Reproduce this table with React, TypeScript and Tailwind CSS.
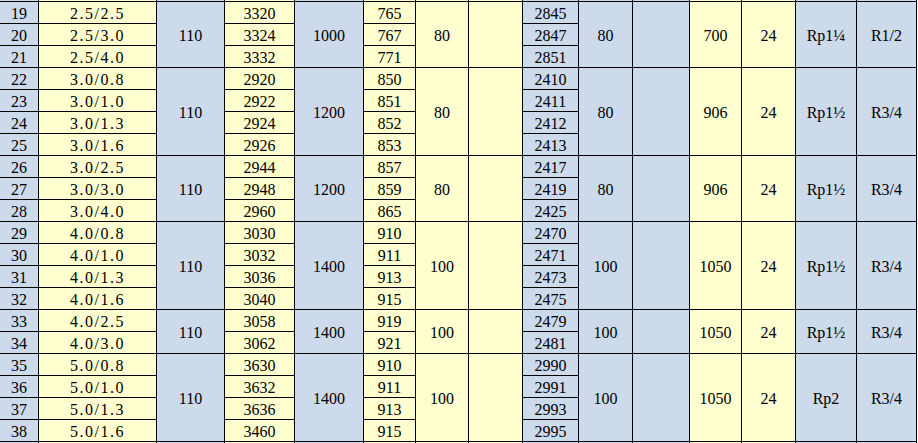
type Group = {
  rows: number[];
  specs: string[];
  a: string;
  b: string[];
  c: string;
  d: string[];
  e: string;
  f: string[];
  g: string;
  h: string;
  i: string;
  j: string;
  k: string;
};

const groups: Group[] = [
  {
    rows: [19, 20, 21],
    specs: ["2.5/2.5", "2.5/3.0", "2.5/4.0"],
    a: "110",
    b: ["3320", "3324", "3332"],
    c: "1000",
    d: ["765", "767", "771"],
    e: "80",
    f: ["2845", "2847", "2851"],
    g: "80",
    h: "700",
    i: "24",
    j: "Rp1¼",
    k: "R1/2",
  },
  {
    rows: [22, 23, 24, 25],
    specs: ["3.0/0.8", "3.0/1.0", "3.0/1.3", "3.0/1.6"],
    a: "110",
    b: ["2920", "2922", "2924", "2926"],
    c: "1200",
    d: ["850", "851", "852", "853"],
    e: "80",
    f: ["2410", "2411", "2412", "2413"],
    g: "80",
    h: "906",
    i: "24",
    j: "Rp1½",
    k: "R3/4",
  },
  {
    rows: [26, 27, 28],
    specs: ["3.0/2.5", "3.0/3.0", "3.0/4.0"],
    a: "110",
    b: ["2944", "2948", "2960"],
    c: "1200",
    d: ["857", "859", "865"],
    e: "80",
    f: ["2417", "2419", "2425"],
    g: "80",
    h: "906",
    i: "24",
    j: "Rp1½",
    k: "R3/4",
  },
  {
    rows: [29, 30, 31, 32],
    specs: ["4.0/0.8", "4.0/1.0", "4.0/1.3", "4.0/1.6"],
    a: "110",
    b: ["3030", "3032", "3036", "3040"],
    c: "1400",
    d: ["910", "911", "913", "915"],
    e: "100",
    f: ["2470", "2471", "2473", "2475"],
    g: "100",
    h: "1050",
    i: "24",
    j: "Rp1½",
    k: "R3/4",
  },
  {
    rows: [33, 34],
    specs: ["4.0/2.5", "4.0/3.0"],
    a: "110",
    b: ["3058", "3062"],
    c: "1400",
    d: ["919", "921"],
    e: "100",
    f: ["2479", "2481"],
    g: "100",
    h: "1050",
    i: "24",
    j: "Rp1½",
    k: "R3/4",
  },
  {
    rows: [35, 36, 37, 38],
    specs: ["5.0/0.8", "5.0/1.0", "5.0/1.3", "5.0/1.6"],
    a: "110",
    b: ["3630", "3632", "3636", "3460"],
    c: "1400",
    d: ["910", "911", "913", "915"],
    e: "100",
    f: ["2990", "2991", "2993", "2995"],
    g: "100",
    h: "1050",
    i: "24",
    j: "Rp2",
    k: "R3/4",
  },
];

const BLUE = "bg-[#cddaeb]";
const YELLOW = "bg-[#ffffd0]";

// column colours, left to right
const colColors = [BLUE, YELLOW, BLUE, YELLOW, BLUE, YELLOW, YELLOW, YELLOW, BLUE, BLUE, BLUE, YELLOW, YELLOW, BLUE, BLUE];

const spanClass: Record<number, string> = {
  2: "row-span-2",
  3: "row-span-3",
  4: "row-span-4",
};

const Cell = ({
  color,
  span,
  wide,
  children,
}: {
  color: string;
  span?: number;
  wide?: boolean;
  children?: React.ReactNode;
}) => (
  <div
    className={`${color} ${span ? spanClass[span] : ""} ${wide ? "tracking-[1.5px]" : ""} flex items-center justify-center pt-[2px] text-[16px] font-normal leading-none text-black`}
  >
    {children}
  </div>
);

export default function App() {
  const cells: React.ReactNode[] = [];

  // 1px sliver of the row above
  colColors.forEach((c, n) => cells.push(<div key={`top-${n}`} className={c} />));

  groups.forEach((g, gi) => {
    const n = g.rows.length;
    g.rows.forEach((row, ri) => {
      const k = `${gi}-${ri}`;
      cells.push(<Cell key={`no-${k}`} color={BLUE}>{row}</Cell>);
      cells.push(<Cell key={`sp-${k}`} color={YELLOW} wide>{g.specs[ri]}</Cell>);
      if (ri === 0) cells.push(<Cell key={`a-${k}`} color={BLUE} span={n}>{g.a}</Cell>);
      cells.push(<Cell key={`b-${k}`} color={YELLOW}>{g.b[ri]}</Cell>);
      if (ri === 0) cells.push(<Cell key={`c-${k}`} color={BLUE} span={n}>{g.c}</Cell>);
      cells.push(<Cell key={`d-${k}`} color={YELLOW}>{g.d[ri]}</Cell>);
      if (ri === 0) {
        cells.push(<Cell key={`e-${k}`} color={YELLOW} span={n}>{g.e}</Cell>);
        cells.push(<Cell key={`x-${k}`} color={YELLOW} span={n} />);
      }
      cells.push(<Cell key={`f-${k}`} color={BLUE}>{g.f[ri]}</Cell>);
      if (ri === 0) {
        cells.push(<Cell key={`g-${k}`} color={BLUE} span={n}>{g.g}</Cell>);
        cells.push(<Cell key={`y-${k}`} color={BLUE} span={n} />);
        cells.push(<Cell key={`h-${k}`} color={YELLOW} span={n}>{g.h}</Cell>);
        cells.push(<Cell key={`i-${k}`} color={YELLOW} span={n}>{g.i}</Cell>);
        cells.push(<Cell key={`j-${k}`} color={BLUE} span={n}>{g.j}</Cell>);
        cells.push(<Cell key={`k-${k}`} color={BLUE} span={n}>{g.k}</Cell>);
      }
    });
  });

  // 1px sliver of the row below
  colColors.forEach((c, n) => cells.push(<div key={`bot-${n}`} className={c} />));

  return (
    <div className="w-[918px] h-[443px] overflow-hidden bg-white font-[family-name:'Liberation_Serif',serif]">
      <div className="grid w-[917px] gap-px border-r border-black bg-black grid-cols-[38px_117px_67px_69px_68px_51px_52px_53px_55px_53px_56px_51px_53px_60px_59px] grid-rows-[1px_repeat(20,21px)_1px]">
        {cells}
      </div>
    </div>
  );
}
